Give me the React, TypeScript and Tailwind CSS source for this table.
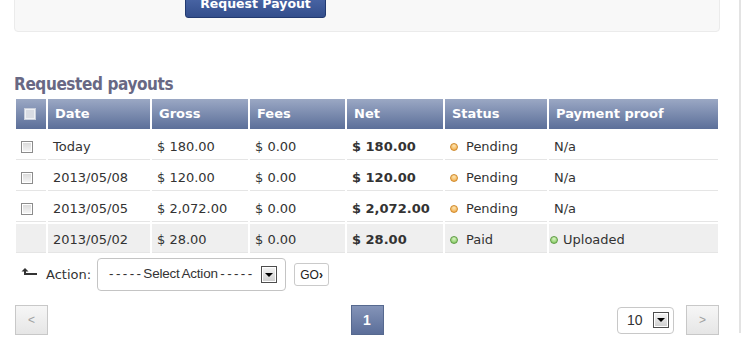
import React from "react"

const rows = [
  { date: "Today", gross: "$ 180.00", fees: "$ 0.00", net: "$ 180.00", status: "Pending", proof: "N/a", check: true },
  { date: "2013/05/08", gross: "$ 120.00", fees: "$ 0.00", net: "$ 120.00", status: "Pending", proof: "N/a", check: true },
  { date: "2013/05/05", gross: "$ 2,072.00", fees: "$ 0.00", net: "$ 2,072.00", status: "Pending", proof: "N/a", check: true },
  { date: "2013/05/02", gross: "$ 28.00", fees: "$ 0.00", net: "$ 28.00", status: "Paid", proof: "Uploaded", check: false },
]

function CheckBox({ header = false }: { header?: boolean }) {
  return header ? (
    <span className="block h-[12px] w-[12px] border border-[#c9cfdb] bg-[#d9dce3] shadow-[inset_0_0_0_1px_#eef0f4]" />
  ) : (
    <span className="block h-[12px] w-[12px] border border-[#8c8c8c] bg-linear-to-b from-[#d8d8d8] to-[#f7f7f7] shadow-[inset_0_0_0_1px_#fff]" />
  )
}

function Dot({ paid }: { paid: boolean }) {
  return paid ? (
    <span className="block h-[8px] w-[8px] shrink-0 rounded-full border border-[#5f9c45] bg-[radial-gradient(circle_at_50%_30%,#d9f5c4,#74bf4e)]" />
  ) : (
    <span className="block h-[8px] w-[8px] shrink-0 rounded-full border border-[#d08a2c] bg-[radial-gradient(circle_at_50%_30%,#fde7b4,#f0a137)]" />
  )
}

function DropArrow({ h = "h-[17px]" }: { h?: string }) {
  return (
    <span className={`flex w-[16px] ${h} items-center justify-center border border-[#4d4d4d] bg-linear-to-b from-[#f5f5f5] to-[#cdcdcd] shadow-[inset_0_0_0_1px_#fff]`}>
      <span className="h-0 w-0 border-x-[4px] border-t-[4px] border-x-transparent border-t-black" />
    </span>
  )
}

export default function App() {
  const th = "h-[30px] bg-linear-to-b from-[#9ba8c4] to-[#5c6f99] pl-[7px] text-left align-middle text-[13px] font-bold text-white"
  return (
    <div className="h-[363px] w-[742px] overflow-hidden bg-white font-['DejaVu_Sans',sans-serif] text-[#333]">
      <div className="h-full w-[741px] border-r-2 border-[#e3e3e3] pl-[14px]">
        <div className="w-[706px]">
          {/* request form panel, top is scrolled away */}
          <div className="mt-[-30px] flex h-[62px] items-end rounded-[4px] border border-[#ebebeb] bg-[#f8f8f8] pb-[13px] pl-[170px]">
            <button className="flex h-[30px] w-[141px] items-center justify-center rounded-[3px] border border-[#223a70] bg-linear-to-b from-[#5470b0] to-[#334e8c] pt-[2px] text-[12.5px] font-bold text-white">
              Request Payout
            </button>
          </div>

          <h2 className="mt-[42px] font-['DejaVu_Sans_Condensed','DejaVu_Sans',sans-serif] text-[17px] leading-[20px] font-bold tracking-[-0.4px] text-[#686884]">
            Requested payouts
          </h2>

          <table className="mt-[3px] w-[706px] table-fixed border-separate border-spacing-[2px] text-[13px]">
            <colgroup>
              <col className="w-[30px]" />
              <col className="w-[102px]" />
              <col className="w-[96px]" />
              <col className="w-[95px]" />
              <col className="w-[96px]" />
              <col className="w-[102px]" />
              <col className="w-[169px]" />
            </colgroup>
            <thead>
              <tr>
                <th className="h-[30px] bg-linear-to-b from-[#9ba8c4] to-[#5c6f99] pl-[8px] align-middle">
                  <CheckBox header />
                </th>
                <th className={th}>Date</th>
                <th className={th}>Gross</th>
                <th className={th}>Fees</th>
                <th className={th}>Net</th>
                <th className={th}>Status</th>
                <th className={th}>Payment proof</th>
              </tr>
            </thead>
            <tbody>
              {rows.map((r) => {
                const td = `h-[29px] border-b border-[#e5e5e5] pt-[3px] pl-[5px] align-middle whitespace-nowrap ${r.check ? "bg-white" : "bg-[#efefef]"}`
                const paid = r.status === "Paid"
                return (
                  <tr key={r.date}>
                    <td className={td}>{r.check && <CheckBox />}</td>
                    <td className={td}>{r.date}</td>
                    <td className={td}>{r.gross}</td>
                    <td className={td}>{r.fees}</td>
                    <td className={`${td} font-bold`}>{r.net}</td>
                    <td className={td}>
                      <span className="flex items-center gap-[8px]">
                        <Dot paid={paid} />
                        {r.status}
                      </span>
                    </td>
                    <td className={td}>
                      {paid ? (
                        <span className="ml-[-4px] flex items-center gap-[5px]">
                          <Dot paid />
                          {r.proof}
                        </span>
                      ) : (
                        r.proof
                      )}
                    </td>
                  </tr>
                )
              })}
            </tbody>
          </table>

          {/* bulk action */}
          <div className="mt-[3px] flex h-[33px] items-center">
            <svg className="mt-[10px] ml-[7px] h-[8px] w-[16px] self-start" viewBox="0 0 16 8">
              <path d="M4 0 L7.5 3.5 L0.5 3.5 Z" fill="#333" />
              <path d="M4 3 V6 H16" fill="none" stroke="#333" strokeWidth="2" />
            </svg>
            <span className="ml-[9px] text-[13px]">Action:</span>
            <div className="ml-[6px] flex h-[33px] w-[189px] items-center rounded-[4px] border border-[#c4c4c4] bg-white pr-[8px] pl-[11px]">
              <span className="flex-1 font-['Liberation_Sans',sans-serif] text-[13.5px] tracking-[-0.2px] [word-spacing:-1px]">
                - - - - - Select Action - - - - -
              </span>
              <DropArrow />
            </div>
            <button className="ml-[8px] flex h-[23px] w-[35px] items-center justify-center rounded-[3px] border border-[#cacaca] bg-white font-['Liberation_Sans',sans-serif] text-[12px] text-[#222]">
              GO<span className="font-bold">›</span>
            </button>
          </div>

          {/* pagination */}
          <div className="mt-[13px] grid h-[32px] grid-cols-[1fr_auto_1fr] items-center font-['Liberation_Sans',sans-serif]">
            <div>
              <button className="ml-[1px] flex h-[30px] w-[33px] items-center justify-center border border-[#c8c8c8] bg-linear-to-b from-[#f6f6f6] to-[#e6e6e6] text-[12px] text-[#a0a0a0]">
                &lt;
              </button>
            </div>
            <button className="flex h-[30px] w-[33px] items-center justify-center border border-[#56698f] bg-linear-to-b from-[#8494b8] to-[#5b6e99] text-[14px] font-bold text-white">
              1
            </button>
            <div className="flex items-center justify-end">
              <div className="flex h-[27px] w-[57px] items-center rounded-[4px] border border-[#c8c8c8] bg-white pr-[4px] pl-[9px]">
                <span className="flex-1 text-[14px]">10</span>
                <DropArrow h="h-[16px]" />
              </div>
              <button className="mr-[1px] ml-[12px] flex h-[30px] w-[33px] items-center justify-center border border-[#c8c8c8] bg-linear-to-b from-[#f6f6f6] to-[#e6e6e6] text-[12px] text-[#a0a0a0]">
                &gt;
              </button>
            </div>
          </div>
        </div>
      </div>
    </div>
  )
}
